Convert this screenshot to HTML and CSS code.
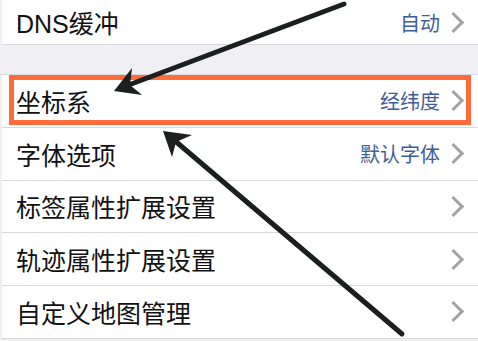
FILE: index.html
```html
<!DOCTYPE html>
<html lang="zh-CN">
<head>
    <meta charset="UTF-8">
    <title>设置</title>
    <link rel="stylesheet" href="styles.css">
</head>
<body>
    <div class="screen">
        <div class="group">
            <div class="cell cell-top">
                <div class="label">DNS缓冲</div>
                <div class="value">自动</div>
                <span class="chevron"></span>
            </div>
        </div>
        <div class="spacer"></div>
        <div class="group">
            <div class="cell">
                <div class="label">坐标系</div>
                <div class="value">经纬度</div>
                <span class="chevron"></span>
            </div>
            <div class="cell">
                <div class="label">字体选项</div>
                <div class="value">默认字体</div>
                <span class="chevron"></span>
            </div>
            <div class="cell">
                <div class="label">标签属性扩展设置</div>
                <span class="chevron"></span>
            </div>
            <div class="cell">
                <div class="label">轨迹属性扩展设置</div>
                <span class="chevron"></span>
            </div>
            <div class="cell">
                <div class="label">自定义地图管理</div>
                <span class="chevron"></span>
            </div>
        </div>

        <svg class="marks" width="478" height="341" viewBox="0 0 478 341">
            <rect x="11.5" y="77.5" width="457" height="45" fill="none" stroke="#fd6c3a" stroke-width="5"/>
            <line x1="344" y1="4" x2="126" y2="86" stroke="#1b1f1f" stroke-width="5" stroke-linecap="round"/>
            <polygon points="114,91 132,68 130,85 142,95" fill="#1b1f1f"/>
            <line x1="402" y1="334" x2="174" y2="140" stroke="#1b1f1f" stroke-width="5" stroke-linecap="round"/>
            <polygon points="163,131 192,135 176,142 172,157" fill="#1b1f1f"/>
        </svg>
    </div>
</body>
</html>
```

FILE: styles.css
```css
body {
    margin: 0;
    background: #efeff4;
    font-family: "Liberation Sans", "Noto Sans CJK SC", sans-serif;
}
.screen {
    position: relative;
    width: 478px;
    height: 341px;
    overflow: hidden;
    background: #efeff4;
}
.group {
    background: #fff;
    margin-left: 2px;
}
.cell {
    display: flex;
    align-items: center;
    height: 51.75px;
    padding: 0 14px 0 14px;
    border-bottom: 1px solid #d9d9dc;
    box-sizing: content-box;
}
.cell-top {
    height: 44px;
}
.spacer {
    height: 29px;
    border-bottom: 1px solid #dcdce0;
}
.label {
    flex: 1;
    font-size: 25px;
    color: #111;
}
.value {
    font-size: 20px;
    color: #3f5d96;
    margin-right: 6px;
}
.chevron {
    width: 12px;
    height: 12px;
    border-top: 3px solid #a2a2a6;
    border-right: 3px solid #a2a2a6;
    transform: rotate(45deg);
    margin-right: 3px;
}
.marks {
    position: absolute;
    left: 0;
    top: 0;
}
```
